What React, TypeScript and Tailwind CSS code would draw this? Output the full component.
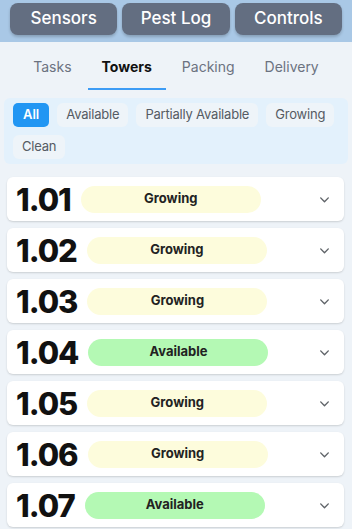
import React from "react";

const towers: { id: string; status: "Growing" | "Available" }[] = [
  { id: "1.01", status: "Growing" },
  { id: "1.02", status: "Growing" },
  { id: "1.03", status: "Growing" },
  { id: "1.04", status: "Available" },
  { id: "1.05", status: "Growing" },
  { id: "1.06", status: "Growing" },
  { id: "1.07", status: "Available" },
];

function Chevron() {
  return (
    <svg width="13" height="13" viewBox="0 0 24 24" fill="none" stroke="#5f6368" strokeWidth="2.6" strokeLinecap="round" strokeLinejoin="round">
      <path d="M5 9l7 7 7-7" />
    </svg>
  );
}

export default function App() {
  return (
    <div className="min-h-[529px] w-full bg-[#eef3f8] font-['Inter',sans-serif] overflow-hidden">
      <div className="flex h-[42px] gap-[5px] bg-[#a9c8e6] px-[10px] pt-[3px]">
        {["Sensors", "Pest Log", "Controls"].map((t) => (
          <button
            key={t}
            className="h-[32px] flex-1 rounded-lg bg-[#636e81] text-[17px] font-medium text-white shadow-[0_2px_3px_rgba(0,0,0,0.2)]"
          >
            {t}
          </button>
        ))}
      </div>
      <div className="flex justify-center gap-[2px]">
        {["Tasks", "Towers", "Packing", "Delivery"].map((t) => (
          <div
            key={t}
            className={
              t === "Towers"
                ? "border-b-2 border-[#3d9cf5] px-[14px] pb-[11px] pt-[15px] text-[14px] font-bold leading-[20px] text-[#111]"
                : "border-b-2 border-transparent px-[14px] pb-[11px] pt-[15px] text-[14px] leading-[20px] text-[#6b7280]"
            }
          >
            {t}
          </div>
        ))}
      </div>
      <div className="mx-[4px] mt-2 flex flex-wrap gap-2 rounded-md bg-[#e3f1fc] px-[9px] py-[5px]">
        {["All", "Available", "Partially Available", "Growing", "Clean"].map((t) => (
          <div
            key={t}
            className={
              t === "All"
                ? "flex h-[24px] items-center rounded-[5px] bg-[#2196f3] px-[10px] text-[13px] font-semibold text-white"
                : "flex h-[24px] items-center rounded-[6px] bg-[#eef4f9] px-[9px] text-[13px] tracking-[-0.2px] text-[#555b63]"
            }
          >
            {t}
          </div>
        ))}
      </div>
      <div className="ml-[7px] mr-[8px] mt-[13px] flex flex-col gap-[7px]">
        {towers.map((t) => (
          <div
            key={t.id}
            className="flex h-[44px] items-center rounded-md bg-white pl-[9px] pr-[13px] shadow-[0_1px_2px_rgba(0,0,0,0.15)]"
          >
            <span className="text-[31px] font-extrabold leading-none tracking-[-1px] text-[#111]">{t.id}</span>
            <span
              className={
                t.status === "Growing"
                  ? "ml-[10px] flex h-[27px] w-[180px] items-center justify-center rounded-full bg-[#fdfcdc] text-[13px] font-bold text-[#222]"
                  : "ml-[10px] flex h-[27px] w-[180px] items-center justify-center rounded-full bg-[#b4f9b4] text-[13px] font-bold text-[#222]"
              }
            >
              {t.status}
            </span>
            <span className="ml-auto">
              <Chevron />
            </span>
          </div>
        ))}
      </div>
    </div>
  );
}
